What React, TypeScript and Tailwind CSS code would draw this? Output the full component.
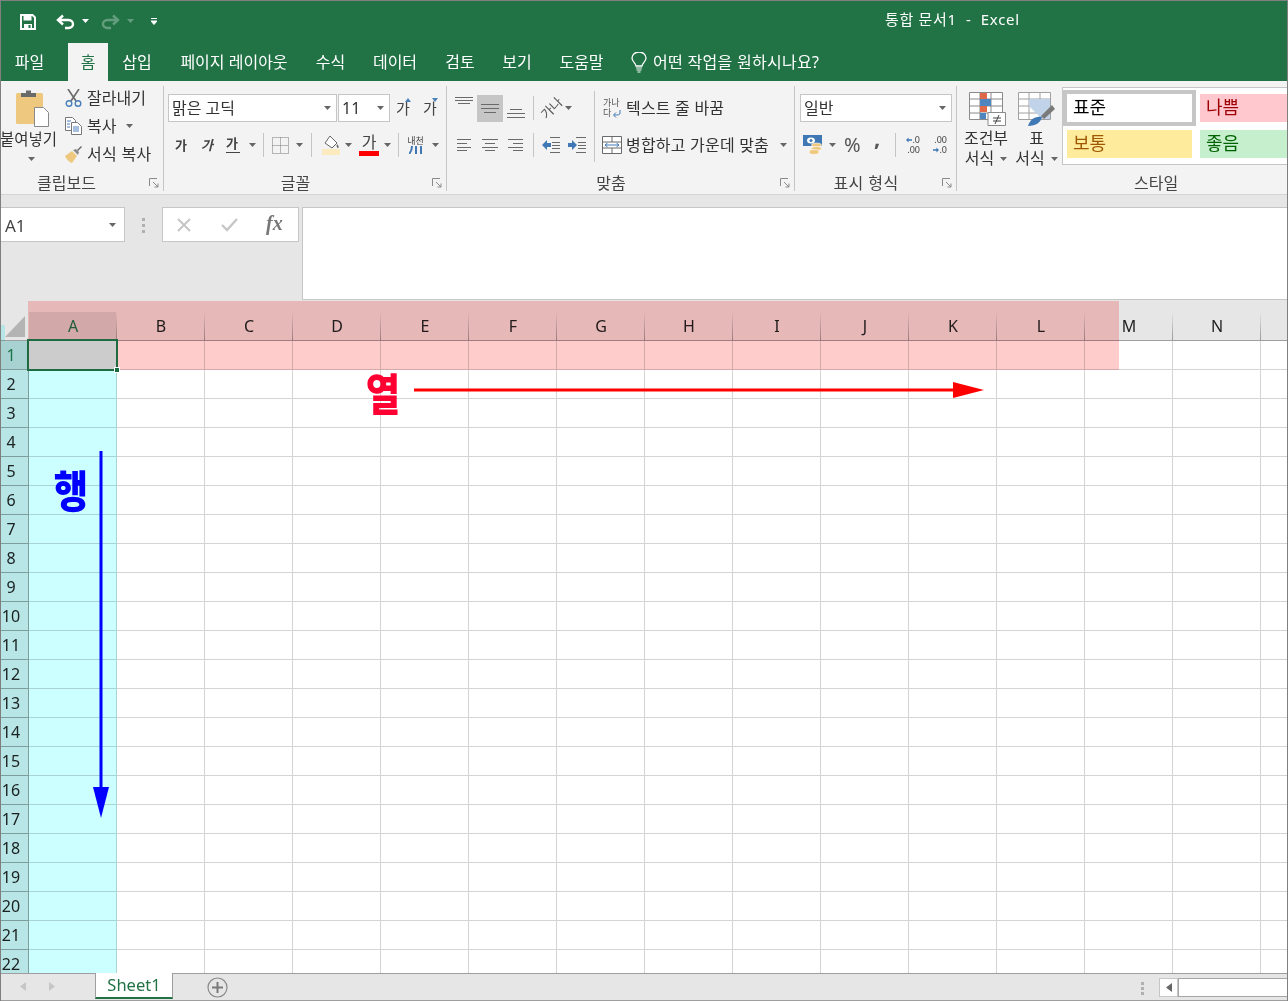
const cols = ['A', 'B', 'C', 'D', 'E', 'F', 'G', 'H', 'I', 'J', 'K', 'L', 'M', 'N', ''];
const rows = Array.from({ length: 22 }, (_, i) => i + 1);

function Caret({ className = '' }: { className?: string }) {
  return (
    <svg width="7" height="4" viewBox="0 0 7 4" className={`shrink-0 ${className}`}>
      <path d="M0 0h7L3.5 4z" fill="#666" />
    </svg>
  );
}

function Launcher() {
  return (
    <svg width="10" height="10" viewBox="0 0 10 10" className="shrink-0">
      <path d="M.5 8V.5H8M4 4l5 5M9 5.5V9H5.5" fill="none" stroke="#8a8a8a" />
    </svg>
  );
}

function Sep({ className = '' }: { className?: string }) {
  return <div className={`w-px h-[24px] bg-[#c6c6c6] shrink-0 ${className}`} />;
}

function Lines({ ys, x1, x2 }: { ys: number[]; x1: number[]; x2: number[] }) {
  return (
    <>
      {ys.map((y, i) => (
        <line key={y} x1={x1[i]} x2={x2[i]} y1={y + 0.5} y2={y + 0.5} stroke="#6a6a6a" />
      ))}
    </>
  );
}

function Label({ children, className = '' }: { children: string; className?: string }) {
  return <div className={`text-[16px] leading-[16px] text-[#444] whitespace-nowrap ${className}`}>{children}</div>;
}

function TitleBar() {
  return (
    <div className="h-[40px] flex items-center relative text-white shrink-0">
      <svg width="16" height="16" viewBox="0 0 16 16" className="ml-[19px] mt-[1px]">
        <path d="M1 1h11.5L15 3.5V15H1z" fill="none" stroke="#fff" strokeWidth="2" />
        <path d="M3.5 1.5h8v5h-8zM4 10h8v5H4z" fill="#fff" />
        <path d="M8.5 11h2v3h-2z" fill="#217346" />
      </svg>
      <svg width="20" height="16" viewBox="0 0 20 16" className="ml-[20px] mt-[2px]">
        <path d="M7 1.5L2 6l5 4.5M2.5 6h10c6 0 6 8 0 8H9" fill="none" stroke="#fff" strokeWidth="2.4" />
      </svg>
      <svg width="7" height="4" viewBox="0 0 7 4" className="ml-[6px]"><path d="M0 0h7L3.5 4z" fill="#fff" /></svg>
      <svg width="20" height="16" viewBox="0 0 20 16" className="ml-[11px] mt-[2px] opacity-30">
        <path d="M13 1.5L18 6l-5 4.5M17.5 6h-10c-6 0-6 8 0 8H11" fill="none" stroke="#fff" strokeWidth="2.4" />
      </svg>
      <svg width="7" height="4" viewBox="0 0 7 4" className="ml-[7px] opacity-30"><path d="M0 0h7L3.5 4z" fill="#fff" /></svg>
      <svg width="6" height="7" viewBox="0 0 6 7" className="ml-[17px]">
        <path d="M0 .5h6M0 3h6L3 6.5z" stroke="#fff" fill="#fff" strokeWidth="1" />
      </svg>
      <div className="ml-[728px] text-[15px] tracking-[0.7px] whitespace-pre mt-[-3px]">통합 문서1  -  Excel</div>
    </div>
  );
}

const tabs = [
  ['파일', 'w-[57px]'],
  ['홈', 'w-[40px] ml-[10px] bg-[#f3f3f3] text-[#217346]'],
  ['삽입', 'w-[58px]'],
  ['페이지 레이아웃', 'w-[136px]'],
  ['수식', 'w-[57px]'],
  ['데이터', 'w-[72px]'],
  ['검토', 'w-[58px]'],
  ['보기', 'w-[56px]'],
  ['도움말', 'w-[73px]'],
];

function TabBar() {
  return (
    <div className="h-[40px] flex items-end text-white text-[16px] shrink-0">
      {tabs.map(([name, cls]) => (
        <div key={name} className={`h-[38px] flex items-center justify-center whitespace-nowrap ${cls}`}>
          {name}
        </div>
      ))}
      <div className="h-[38px] flex items-center ml-[13px] whitespace-nowrap">
        <svg width="16" height="21" viewBox="0 0 16 21">
          <path d="M5 14c0-3-4-4-4-8a7 6 0 0 1 14 0c0 4-4 5-4 8z" fill="none" stroke="#fff" strokeWidth="1.3" />
          <path d="M5 16h6M5.5 18h5M6.5 20h3" stroke="#fff" />
        </svg>
        <span className="ml-[6px] tracking-[0.3px]">어떤 작업을 원하시나요?</span>
      </div>
    </div>
  );
}

function Clipboard() {
  return (
    <div className="w-[163px] h-[105px] border-r border-[#c6c6c6] flex flex-col shrink-0">
      <div className="flex h-[89px]">
        <div className="w-[56px] flex flex-col items-center text-[15.5px] text-[#333] relative">
          <svg width="34" height="38" viewBox="0 0 34 38" className="mt-[3px] ml-[7px] shrink-0">
            <rect x="0" y="4" width="27" height="31" rx="1.5" fill="#edc87e" />
            <path d="M5 8V4h5V1.5h5V4h5v4z" fill="#6a6a6a" />
            <path d="M18.5 18.5h9l5 5v14h-14z" fill="#fff" stroke="#8a8a8a" />
          </svg>
          <div className="whitespace-nowrap mt-[2px] leading-[20px] ml-[-1px]">붙여넣기</div>
          <Caret className="mt-[8px] ml-[5px]" />
        </div>
        <div className="ml-[8px] flex flex-col gap-2 pt-[2px] text-[16px] text-[#333] whitespace-nowrap">
          <div className="h-5 flex items-center">
            <svg width="17" height="18" viewBox="0 0 17 18">
              <path d="M3 0l8 12M14 0L6 12" stroke="#6a6a6a" strokeWidth="1.6" />
              <circle cx="4" cy="14.5" r="2.8" fill="none" stroke="#4a7fb8" strokeWidth="1.4" />
              <circle cx="13" cy="14.5" r="2.8" fill="none" stroke="#4a7fb8" strokeWidth="1.4" />
            </svg>
            <span className="ml-[5px]">잘라내기</span>
          </div>
          <div className="h-5 flex items-center">
            <svg width="17" height="18" viewBox="0 0 17 18">
              <path d="M.5.5h7l3 3v10H.5z" fill="#fff" stroke="#777" />
              <path d="M6.5 5.5h6l4 4v8h-10z" fill="#fff" stroke="#777" />
              <path d="M2 4h4M2 7h3M2 10h3M8 10h6M8 12h6M8 14h6" stroke="#4a7fb8" />
            </svg>
            <span className="ml-[5px]">복사</span>
            <Caret className="ml-[10px]" />
          </div>
          <div className="h-5 flex items-center">
            <svg width="17" height="17" viewBox="0 0 17 17">
              <path d="M0 10l7-5 5 5-5 7c-2 0-6-4-7-7z" fill="#edc87e" />
              <path d="M8 4l3-1 3 3-1 3z" fill="#8a8a8a" />
              <path d="M12 4l4-4 1 1-4 4z" fill="#6a6a6a" />
            </svg>
            <span className="ml-[5px] tracking-[0.3px]">서식 복사</span>
          </div>
        </div>
      </div>
      <div className="flex items-center">
        <Label className="w-[131px] text-center">클립보드</Label>
        <div className="ml-[17px]"><Launcher /></div>
      </div>
    </div>
  );
}

function GrowFont({ up }: { up?: boolean }) {
  return (
    <div className="w-[14px] h-[20px] relative text-[15px] leading-[20px] text-[#444] text-center">
      가
      <svg width="6" height="4" viewBox="0 0 6 4" className="absolute right-[-1px] top-0">
        <path d={up ? 'M0 4h6L3 0z' : 'M0 0h6L3 4z'} fill="#4a7fb8" />
      </svg>
    </div>
  );
}

function Select({ width, children }: { width: string; children: string }) {
  return (
    <div className={`${width} h-[28px] bg-white border border-[#c6c6c6] flex items-center justify-between pl-[3px] pr-[5px] text-[16px] text-[#333] shrink-0`}>
      <span>{children}</span>
      <Caret />
    </div>
  );
}

function Font() {
  return (
    <div className="w-[283px] h-[105px] border-r border-[#c6c6c6] flex flex-col shrink-0">
      <div className="h-[89px] pt-[8px]">
        <div className="flex items-center">
          <div className="ml-[4px]"><Select width="w-[169px]">맑은 고딕</Select></div>
          <div className="ml-px"><Select width="w-[52px]">11</Select></div>
          <div className="ml-[6px]"><GrowFont up /></div>
          <div className="ml-[13px]"><GrowFont /></div>
        </div>
        <div className="flex items-center h-[24px] mt-[11px] text-[#444] text-[13px] leading-none">
          <span className="ml-[11px] w-[12px] font-bold">가</span>
          <span className="ml-[14px] w-[12px] italic font-bold">가</span>
          <span className="ml-[13px] w-[14px] border-b border-[#444] pb-[2px] font-semibold">가</span>
          <Caret className="ml-[9px]" />
          <Sep className="ml-[7px]" />
          <svg width="17" height="17" viewBox="0 0 17 17" className="ml-[8px]">
            <path d="M.5.5h16v16H.5zM8.5.5v16M.5 8.5h16" fill="none" stroke="#777" strokeDasharray="1 1" />
          </svg>
          <Caret className="ml-[7px]" />
          <Sep className="ml-[8px]" />
          <svg width="18" height="20" viewBox="0 0 18 20" className="ml-[10px]">
            <path d="M0 14h18v6H0z" fill="#fdebc0" />
            <path d="M8 1l7 7-5 5-7-5z" fill="#fff" stroke="#666" />
            <path d="M15 9c2 2 2 4 1 4s-2-2-1-4z" fill="#666" />
          </svg>
          <Caret className="ml-[5px]" />
          <div className="ml-[8px] w-[18px] flex flex-col items-center">
            <span className="text-[16px] leading-[17px]">가</span>
            <div className="w-[20px] h-[5px] bg-[#ff0000] shrink-0" />
          </div>
          <Caret className="ml-[6px]" />
          <Sep className="ml-[7px]" />
          <div className="ml-[8px] w-[17px] flex flex-col items-center">
            <span className="text-[9px] leading-[10px] whitespace-nowrap">내천</span>
            <svg width="14" height="8" viewBox="0 0 14 8">
              <path d="M3 0c0 4-1 6-3 8M7 0v8M12 0v8" fill="none" stroke="#3f78b5" strokeWidth="2" />
            </svg>
          </div>
          <Caret className="ml-[8px]" />
        </div>
      </div>
      <div className="flex items-center">
        <Label className="w-[263px] text-center">글꼴</Label>
        <div className="ml-[5px]"><Launcher /></div>
      </div>
    </div>
  );
}

function Align() {
  return (
    <div className="w-[348px] h-[105px] border-r border-[#c6c6c6] flex flex-col shrink-0">
      <div className="h-[89px] flex items-start">
        <div className="w-[147px] shrink-0 pt-[8px]">
          <div className="h-[28px] flex items-center">
            <svg width="18" height="12" viewBox="0 0 18 12" className="ml-[8px] mb-[12px]">
              <Lines ys={[1, 4, 7]} x1={[0, 0, 3]} x2={[18, 18, 15]} />
            </svg>
            <div className="ml-[4px] w-[26px] h-[27px] bg-[#c6c6c6] flex items-center justify-center">
              <svg width="18" height="11" viewBox="0 0 18 11">
                <Lines ys={[1, 5, 9]} x1={[0, 0, 3]} x2={[18, 18, 15]} />
              </svg>
            </div>
            <svg width="18" height="10" viewBox="0 0 18 10" className="ml-[4px] mt-[12px]">
              <Lines ys={[0, 4, 8]} x1={[3, 0, 0]} x2={[15, 18, 18]} />
            </svg>
            <Sep className="ml-[8px]" />
            <div className="ml-[6px] w-[23px] h-[22px] flex items-center justify-center text-[13px] leading-none text-[#555] -rotate-45 whitespace-nowrap">
              가나
            </div>
            <Caret className="ml-[2px]" />
          </div>
          <div className="h-[24px] mt-[11px] flex items-center">
            <svg width="14" height="12" viewBox="0 0 14 12" className="ml-[10px]">
              <Lines ys={[0, 4, 8, 11]} x1={[0, 0, 0, 0]} x2={[14, 10, 14, 10]} />
            </svg>
            <svg width="16" height="12" viewBox="0 0 16 12" className="ml-[11px]">
              <Lines ys={[0, 4, 8, 11]} x1={[0, 3, 0, 3]} x2={[16, 13, 16, 13]} />
            </svg>
            <svg width="15" height="12" viewBox="0 0 15 12" className="ml-[10px]">
              <Lines ys={[0, 4, 8, 11]} x1={[0, 5, 0, 5]} x2={[15, 15, 15, 15]} />
            </svg>
            <Sep className="ml-[10px]" />
            <svg width="18" height="16" viewBox="0 0 18 16" className="ml-[8px]">
              <path d="M8 .5h10M8 15.5h10M10 5.5h8M10 8.5h8M10 11.5h8" stroke="#6a6a6a" />
              <path d="M0 8l5-5v3h4v4H5v3z" fill="#3f78b5" />
            </svg>
            <svg width="18" height="16" viewBox="0 0 18 16" className="ml-[8px]">
              <path d="M8 .5h10M8 15.5h10M10 5.5h8M10 8.5h8M10 11.5h8" stroke="#6a6a6a" />
              <path d="M9 8L4 3v3H0v4h4v3z" fill="#3f78b5" />
            </svg>
          </div>
        </div>
        <div className="w-px h-[71px] bg-[#c6c6c6] mt-[5px] shrink-0" />
        <div className="pt-[8px] text-[16px] text-[#333] whitespace-nowrap">
          <div className="h-[28px] flex items-center">
            <div className="ml-[8px] w-[18px] flex flex-col text-[9px] leading-[10px] text-[#555] relative">
              <span>가나</span>
              <span>다</span>
              <svg width="9" height="8" viewBox="0 0 9 8" className="absolute right-0 bottom-0">
                <path d="M8 0v3c0 2-2 2-6 2M4 2.5L1.5 5 4 7.5" fill="none" stroke="#3f78b5" />
              </svg>
            </div>
            <span className="ml-[5px] tracking-[0.2px]">텍스트 줄 바꿈</span>
          </div>
          <div className="h-[24px] mt-[11px] flex items-center">
            <svg width="20" height="18" viewBox="0 0 20 18" className="ml-[7px]">
              <path d="M.5.5h19v17H.5zM.5 6h19M.5 12h19M10 .5V6M10 12v6" fill="#fff" stroke="#6a6a6a" />
              <path d="M3 9h14M5.5 7L3 9l2.5 2M14.5 7L17 9l-2.5 2" fill="none" stroke="#3f78b5" />
            </svg>
            <span className="ml-[4px] w-[144px] tracking-[0.2px]">병합하고 가운데 맞춤</span>
            <Caret className="ml-[10px]" />
          </div>
        </div>
      </div>
      <div className="flex items-center">
        <Label className="w-[328px] text-center">맞춤</Label>
        <div className="ml-[5px]"><Launcher /></div>
      </div>
    </div>
  );
}

function NumberGroup() {
  return (
    <div className="w-[162px] h-[105px] border-r border-[#c6c6c6] flex flex-col shrink-0">
      <div className="h-[89px] pt-[8px]">
        <div className="ml-[5px]"><Select width="w-[152px]">일반</Select></div>
        <div className="h-[24px] mt-[11px] flex items-center text-[#555]">
          <svg width="19" height="20" viewBox="0 0 19 20" className="ml-[8px]">
            <path d="M0 0h19v11H0z" fill="#3f78b5" />
            <ellipse cx="8" cy="5.5" rx="4" ry="3" fill="#fff" />
            <circle cx="8" cy="5.5" r="1.5" fill="#3f78b5" />
            <ellipse cx="13.5" cy="10" rx="5" ry="2" fill="#edc87e" stroke="#fff" strokeWidth=".6" />
            <ellipse cx="13.5" cy="13.5" rx="5" ry="2" fill="#edc87e" stroke="#fff" strokeWidth=".6" />
            <ellipse cx="11" cy="17" rx="5" ry="2.4" fill="#edc87e" stroke="#fff" strokeWidth=".6" />
          </svg>
          <Caret className="ml-[7px]" />
          <span className="ml-[8px] w-[15px] text-[20px] leading-none">%</span>
          <span className="ml-[15px] w-[6px] text-[22px] leading-none font-bold mt-[-16px]">,</span>
          <Sep className="ml-[15px]" />
          <div className="ml-[9px] w-[15px] text-[9px] leading-[10px] text-[#444] flex flex-col items-end">
            <span className="flex items-center">
              <svg width="6" height="6" viewBox="0 0 7 6"><path d="M0 3l3-3v2h4v2H3v2z" fill="#3f78b5" /></svg>
              .0
            </span>
            <span>.00</span>
          </div>
          <div className="ml-[10px] w-[17px] text-[9px] leading-[10px] text-[#444] flex flex-col items-end">
            <span>.00</span>
            <span className="flex items-center">
              <svg width="6" height="6" viewBox="0 0 7 6"><path d="M7 3L4 0v2H0v2h4v2z" fill="#3f78b5" /></svg>
              .0
            </span>
          </div>
        </div>
      </div>
      <div className="flex items-center">
        <Label className="w-[142px] text-center tracking-[0.4px]">표시 형식</Label>
        <div className="ml-[5px]"><Launcher /></div>
      </div>
    </div>
  );
}

function StyleCell({ cls, children }: { cls: string; children: string }) {
  return <div className={`flex items-center pl-[6px] pb-[3px] text-[18px] leading-none ${cls}`}>{children}</div>;
}

function Styles() {
  return (
    <div className="flex-1 h-[105px] flex flex-col min-w-0">
      <div className="h-[89px] flex items-start">
        <div className="w-[50px] ml-[4px] flex flex-col items-center pt-[6px] text-[16px] text-[#333] leading-[19px] shrink-0 whitespace-nowrap">
          <svg width="37" height="34" viewBox="0 0 37 34" className="shrink-0 ml-[2px]">
            <path d="M.5.5h33v27H.5zM.5 7h33M.5 14h33M.5 21h33M11 .5v27M22 .5v27" fill="#fff" stroke="#8a8a8a" />
            <path d="M11 1h7v6h-7zM11 14h7v6h-7z" fill="#e0694a" />
            <path d="M11 7h11v7H11zM11 21h6v6h-6z" fill="#4f86c0" />
            <path d="M19 20.5h17.5v13H19z" fill="#fff" stroke="#8a8a8a" />
            <path d="M24 26h8M24 29h8M30 23l-4 9" stroke="#444" />
          </svg>
          <div className="mt-[3px]">조건부</div>
          <div className="flex items-center mt-px">
            서식
            <Caret className="ml-[6px]" />
          </div>
        </div>
        <div className="w-[51px] flex flex-col items-center pt-[6px] text-[16px] text-[#333] leading-[19px] shrink-0 whitespace-nowrap">
          <svg width="37" height="34" viewBox="0 0 37 34" className="shrink-0">
            <path d="M.5.5h32v27H.5zM.5 7h32M.5 14h32M.5 21h32M11 .5v27M22 .5v27" fill="#fff" stroke="#a0a0a0" />
            <path d="M11 7h21v20H24L11 14z" fill="#c0d3e8" />
            <path d="M37 17l-11 10-3-3 11-11z" fill="#7a7a7a" />
            <path d="M10 34c2-6 6-10 14-9-1 5-6 9-14 9z" fill="#3f78b5" />
          </svg>
          <div className="mt-[3px]">표</div>
          <div className="flex items-center mt-px">
            서식
            <Caret className="ml-[6px]" />
          </div>
        </div>
        <div className="flex-1 min-w-0 h-[78px] mt-px border border-[#c6c6c6] border-r-0 bg-white pt-[2px] overflow-hidden">
          <div className="grid grid-cols-[133px_133px] grid-rows-[36px_36px]">
            <div className="border-[4px] border-[#c6c6c6] bg-white flex">
              <StyleCell cls="flex-1 text-black">표준</StyleCell>
            </div>
            <div className="p-[4px] flex"><StyleCell cls="flex-1 bg-[#ffc7ce] text-[#9c0006]">나쁨</StyleCell></div>
            <div className="p-[4px] flex"><StyleCell cls="flex-1 bg-[#ffeb9c] text-[#9c5700]">보통</StyleCell></div>
            <div className="p-[4px] flex"><StyleCell cls="flex-1 bg-[#c6efce] text-[#006100]">좋음</StyleCell></div>
          </div>
        </div>
      </div>
      <Label className="ml-[177px]">스타일</Label>
    </div>
  );
}

function FormulaBar() {
  return (
    <div className="h-[105px] bg-[#e6e6e6] pt-[12px] flex items-start shrink-0">
      <div className="w-[124px] h-[35px] bg-white border border-l-0 border-[#c6c6c6] flex items-center justify-between pl-[4px] pr-[8px] text-[17px] text-[#444]">
        <span className="mt-[2px]">A1</span>
        <Caret />
      </div>
      <div className="ml-[17px] w-[3px] mt-[11px] flex flex-col gap-[3px] shrink-0">
        <div className="w-[3px] h-[3px] bg-[#b0b0b0]" />
        <div className="w-[3px] h-[3px] bg-[#b0b0b0]" />
        <div className="w-[3px] h-[3px] bg-[#b0b0b0]" />
      </div>
      <div className="ml-[17px] w-[137px] h-[35px] bg-white border border-[#c6c6c6] flex items-center shrink-0">
        <svg width="14" height="14" viewBox="0 0 14 14" className="ml-[14px]">
          <path d="M1 1l12 12M13 1L1 13" stroke="#c6c6c6" strokeWidth="2" />
        </svg>
        <svg width="17" height="14" viewBox="0 0 17 14" className="ml-[30px]">
          <path d="M1 7l5 5L16 1" fill="none" stroke="#c6c6c6" strokeWidth="2.4" />
        </svg>
        <span className="ml-[28px] font-['Liberation_Serif',serif] italic font-bold text-[20px] leading-none text-[#777] mt-[-4px]">fx</span>
      </div>
      <div className="ml-[3px] flex-1 h-[93px] bg-white border border-r-0 border-[#c6c6c6]" />
    </div>
  );
}

function Grid() {
  return (
    <div className="h-[673px] overflow-hidden text-[16px] shrink-0 bg-white">
      <div className="h-[41px] flex bg-[#e6e6e6] border-b border-[#9e9e9e]">
        <div className="w-[28px] shrink-0 flex items-end">
          <svg width="28" height="28" viewBox="0 0 28 28">
            <path d="M4 25L24 4v21z" fill="#b4b4b4" />
          </svg>
        </div>
        {cols.map((c) => (
          <div key={c} className="w-[88px] shrink-0 flex items-end">
            <div className={`flex-1 h-[28px] pl-px flex items-center justify-center ${c === 'A' ? 'bg-[#d2d2d2] text-[#217346]' : 'text-[#222]'}`}>
              {c}
            </div>
            <div className="w-px h-[28px] bg-gradient-to-b from-transparent to-[#9a9a9a]" />
          </div>
        ))}
      </div>
      {rows.map((r) => (
        <div key={r} className="h-[29px] flex">
          <div className={`w-[28px] shrink-0 border-r border-b border-[#9e9e9e] text-center pr-[7px] leading-[29px] ${r === 1 ? 'bg-[#d2d2d2] text-[#217346]' : 'bg-[#e6e6e6] text-[#222]'}`}>
            {r}
          </div>
          {cols.map((c) => (
            <div key={c} className="w-[88px] shrink-0 border-r border-b border-[#d4d4d4]" />
          ))}
        </div>
      ))}
    </div>
  );
}

function SheetBar() {
  return (
    <div className="h-[28px] bg-[#e6e6e6] border-t border-b border-[#9e9e9e] flex items-start relative shrink-0">
      <svg width="6" height="9" viewBox="0 0 6 9" className="ml-[19px] mt-[8px]"><path d="M6 0v9L0 4.5z" fill="#c6c6c6" /></svg>
      <svg width="6" height="9" viewBox="0 0 6 9" className="ml-[23px] mt-[8px]"><path d="M0 0v9l6-4.5z" fill="#c6c6c6" /></svg>
      <div className="ml-[40px] w-[76px] h-[24px] -mt-px bg-white border-x border-[#9e9e9e] border-b-[2px] border-b-[#217346] flex items-center justify-center text-[16.5px] text-[#217346] shrink-0 box-content">
        Sheet1
      </div>
      <svg width="21" height="21" viewBox="0 0 21 21" className="ml-[34px] mt-[3px]">
        <circle cx="10.5" cy="10.5" r="9.5" fill="none" stroke="#8a8a8a" strokeWidth="1.2" />
        <path d="M10.5 5v11M5 10.5h11" stroke="#7a7a7a" strokeWidth="2" />
      </svg>
      <div className="ml-[913px] w-[3px] mt-[8px] flex flex-col gap-[2px] shrink-0">
        <div className="w-[3px] h-[3px] bg-[#b0b0b0]" />
        <div className="w-[3px] h-[3px] bg-[#b0b0b0]" />
        <div className="w-[3px] h-[3px] bg-[#b0b0b0]" />
      </div>
      <div className="ml-[15px] w-[19px] h-[19px] mt-[4px] bg-white border border-[#c6c6c6] flex items-center justify-center shrink-0">
        <svg width="6" height="9" viewBox="0 0 6 9"><path d="M6 0v9L0 4.5z" fill="#666" /></svg>
      </div>
      <div className="flex-1 h-[19px] mt-[4px] bg-white border border-r-0 border-[#a6a6a6]" />
    </div>
  );
}

export default function App() {
  return (
    <div className="w-[1288px] h-[1001px] relative overflow-hidden bg-[#217346] border-x border-t border-[#7f7f7f] flex flex-col font-['Noto_Sans','Noto_Sans_CJK_KR',sans-serif]">
      <TitleBar />
      <TabBar />
      <div className="h-[114px] bg-[#f3f3f3] border-b border-[#d4d4d4] pt-[5px] flex shrink-0">
        <Clipboard />
        <Font />
        <Align />
        <NumberGroup />
        <Styles />
      </div>
      <FormulaBar />
      <Grid />
      <SheetBar />

      {/* drawn-on highlights and notes */}
      <div className="absolute left-[27px] top-[300px] w-[1091px] h-[69px] bg-[#ffcccc] mix-blend-multiply" />
      <div className="absolute left-0 top-[340px] w-[116px] h-[632px] bg-[#ccffff] mix-blend-multiply" />
      <div className="absolute left-0 top-[324px] w-[4px] h-[16px] bg-[#ccffff] mix-blend-multiply" />
      <div className="absolute left-[26px] top-[338px] w-[91px] h-[32px] border-2 border-[#1e6b41]" />
      <div className="absolute left-[113px] top-[366px] w-[6px] h-[6px] bg-[#1e6b41] border border-white" />
      <div className="absolute left-[360px] top-[368px] w-[44px] text-center text-[44px] leading-[46px] font-black text-[#ff0033] scale-x-[0.85] font-['Noto_Sans_CJK_KR',sans-serif]">
        열
      </div>
      <svg width="572" height="16" viewBox="0 0 572 16" className="absolute left-[412px] top-[381px]">
        <path d="M1 8h545" stroke="#ff0000" strokeWidth="3" />
        <path d="M540 0l31 8-31 8z" fill="#ff0000" />
      </svg>
      <div className="absolute left-[48px] top-[465px] w-[44px] text-center text-[44px] leading-[46px] font-black text-[#0000ff] scale-x-[0.85] font-['Noto_Sans_CJK_KR',sans-serif]">
        행
      </div>
      <svg width="16" height="367" viewBox="0 0 16 367" className="absolute left-[92px] top-[450px]">
        <path d="M8 0v340" stroke="#0000ff" strokeWidth="3" />
        <path d="M0 336l8 31 8-31z" fill="#0000ff" />
      </svg>
    </div>
  );
}
